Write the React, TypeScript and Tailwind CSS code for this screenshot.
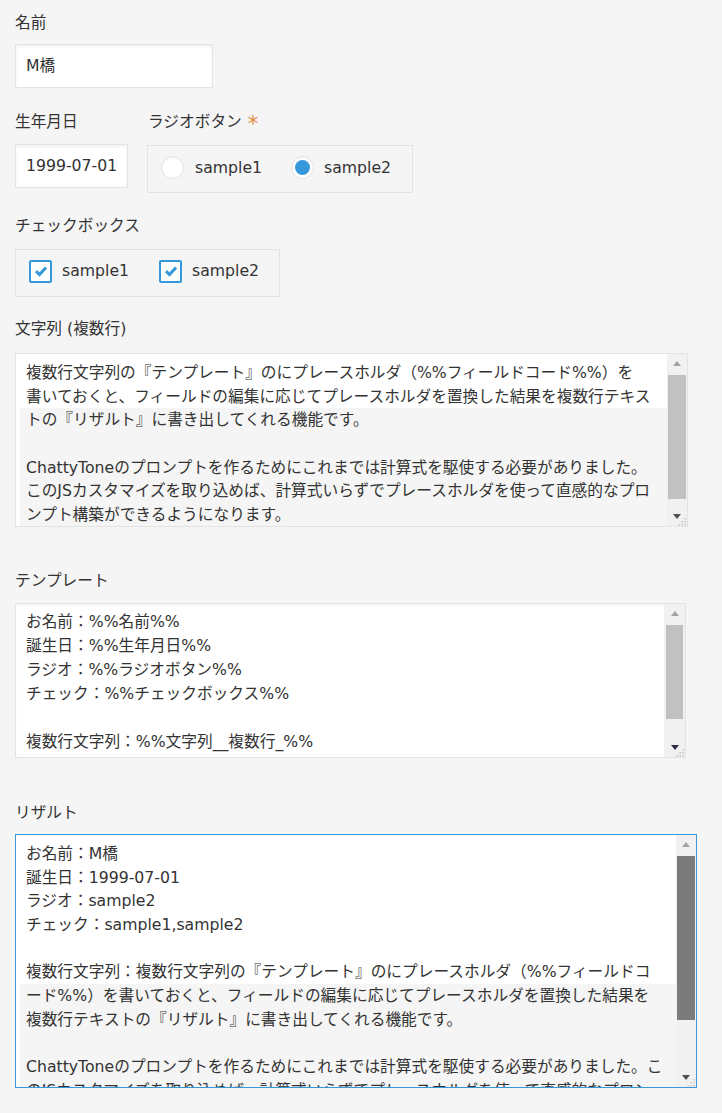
import React from 'react';

const memoWhite = [
  '複数行文字列の『テンプレート』のにプレースホルダ（%%フィールドコード%%）を',
  '書いておくと、フィールドの編集に応じてプレースホルダを置換した結果を複数行テキス',
];
const memoGray = [
  'トの『リザルト』に書き出してくれる機能です。',
  '',
  'ChattyToneのプロンプトを作るためにこれまでは計算式を駆使する必要がありました。',
  'このJSカスタマイズを取り込めば、計算式いらずでプレースホルダを使って直感的なプロ',
  'ンプト構築ができるようになります。',
];

const templateLines = [
  'お名前：%%名前%%',
  '誕生日：%%生年月日%%',
  'ラジオ：%%ラジオボタン%%',
  'チェック：%%チェックボックス%%',
  '',
  '複数行文字列：%%文字列__複数行_%%',
];

const resultWhite = [
  'お名前：M橋',
  '誕生日：1999-07-01',
  'ラジオ：sample2',
  'チェック：sample1,sample2',
  '',
  '複数行文字列：複数行文字列の『テンプレート』のにプレースホルダ（%%フィールドコ',
];
const resultGray = [
  'ード%%）を書いておくと、フィールドの編集に応じてプレースホルダを置換した結果を',
  '複数行テキストの『リザルト』に書き出してくれる機能です。',
  '',
  'ChattyToneのプロンプトを作るためにこれまでは計算式を駆使する必要がありました。こ',
  'のJSカスタマイズを取り込めば、計算式いらずでプレースホルダを使って直感的なプロン',
  'プト構築ができるようになります。',
];

const Label: React.FC<{children: React.ReactNode}> = ({children}) => (
  <div className="h-6 leading-6 flex items-center whitespace-nowrap">{children}</div>
);

const Lines: React.FC<{lines: string[]}> = ({lines}) => (
  <>
    {lines.map((l, i) => (
      <div key={i} className="h-[23.7px] leading-[23.7px] whitespace-pre">{l || ' '}</div>
    ))}
  </>
);

const Arrow: React.FC<{up?: boolean; color: string}> = ({up, color}) => (
  <svg width="8" height="5" viewBox="0 0 8 5">
    <path d={up ? 'M0 5 L4 0 L8 5 Z' : 'M0 0 L8 0 L4 5 Z'} fill={color}/>
  </svg>
);

const Scrollbar: React.FC<{width: string; thumb: string; down: string}> = ({width, thumb, down}) => (
  <div className={`flex flex-col bg-[#f1f1f1] shrink-0 ${width}`}>
    <div className="h-[19px] flex items-center justify-center">
      <Arrow up color="#a3a3a3"/>
    </div>
    <div className="flex-1">
      <div className={thumb}/>
    </div>
    <div className="h-[19px] flex items-center justify-center relative">
      <Arrow color={down}/>
      <svg className="absolute right-0 bottom-0" width="10" height="10" viewBox="0 0 10 10">
        <rect x="7.5" y="2" width="1.5" height="1.5" fill="#c4c4c4"/>
        <rect x="4.5" y="5" width="1.5" height="1.5" fill="#c4c4c4"/>
        <rect x="7.5" y="5" width="1.5" height="1.5" fill="#c4c4c4"/>
        <rect x="1.5" y="8" width="1.5" height="1.5" fill="#c4c4c4"/>
        <rect x="4.5" y="8" width="1.5" height="1.5" fill="#c4c4c4"/>
        <rect x="7.5" y="8" width="1.5" height="1.5" fill="#c4c4c4"/>
      </svg>
    </div>
  </div>
);

const Check: React.FC = () => (
  <span className="w-[23px] h-[23px] rounded-[2px] border-2 border-[#3498db] bg-white flex items-center justify-center shrink-0">
    <svg width="14" height="12" viewBox="0 0 14 12">
      <path d="M2 6.2 L5.5 9.5 L12 2.5" fill="none" stroke="#3498db" strokeWidth="3"/>
    </svg>
  </span>
);

const Radio: React.FC<{checked?: boolean}> = ({checked}) => (
  <span className="w-[23px] h-[23px] rounded-full border border-[#e3e3e3] bg-white flex items-center justify-center shrink-0 shadow-[inset_0_1px_2px_rgba(0,0,0,0.05)]">
    {checked && <span className="w-[15px] h-[15px] rounded-full bg-[#3498db]"/>}
  </span>
);

const inputCls =
  'h-[44px] border border-[#e3e3e3] bg-white pl-[10px] flex items-center shadow-[inset_0_2px_3px_rgba(0,0,0,0.05)]';

export default function App() {
  return (
    <div className="min-h-screen bg-[#f5f5f5] px-[15px] pt-[11px] text-[#333] text-[15.7px] font-['DejaVu_Sans','Noto_Sans_CJK_JP',sans-serif]">
      <Label>名前</Label>
      <div className={`${inputCls} mt-[9px] w-[198px]`}>M橋</div>

      <div className="mt-[22px] flex gap-[19px]">
        <div>
          <Label>生年月日</Label>
          <div className={`${inputCls} mt-[10px] w-[113px]`}>1999-07-01</div>
        </div>
        <div>
          <div className="pl-px">
            <Label>
              ラジオボタン
              <span className="ml-[6px] text-[#e38b3a] text-[21px] leading-none pt-[4px]">*</span>
            </Label>
          </div>
          <div className="mt-[11px] h-[48px] w-[266px] border border-[#e3e3e3] flex items-center pl-[13px] pb-[3px]">
            <Radio/>
            <span className="ml-[11px]">sample1</span>
            <span className="ml-[29px]"><Radio checked/></span>
            <span className="ml-[10px]">sample2</span>
          </div>
        </div>
      </div>

      <div className="mt-[21px]">
        <Label>チェックボックス</Label>
        <div className="mt-[11px] h-[48px] w-[265px] border border-[#e3e3e3] flex items-center pl-[13px] pb-[4px]">
          <Check/>
          <span className="ml-[10px]">sample1</span>
          <span className="ml-[30px]"><Check/></span>
          <span className="ml-[10px]">sample2</span>
        </div>
      </div>

      <div className="mt-[20px]">
        <Label>文字列 (複数行)</Label>
        <div className="mt-[12px] h-[174px] w-[673px] border border-[#e3e3e3] bg-white flex">
          <div className="flex-1 overflow-hidden pl-[10px] pt-[7px]">
            <Lines lines={memoWhite}/>
            <div className="-ml-[6px] pl-[6px] bg-[#f5f5f5]">
              <Lines lines={memoGray}/>
            </div>
          </div>
          <Scrollbar width="w-[20px]" thumb="mt-[2px] h-[124px] mx-[1px] bg-[#c1c1c1]" down="#505050"/>
        </div>
      </div>

      <div className="mt-[42px]">
        <Label>テンプレート</Label>
        <div className="mt-[10px] h-[155px] w-[671px] border border-[#e3e3e3] bg-white flex shadow-[inset_0_2px_3px_rgba(0,0,0,0.04)]">
          <div className="flex-1 overflow-hidden pl-[10px] pt-[6px]">
            <div className="leading-6">
              {templateLines.map((l, i) => (
                <div key={i} className="h-6 whitespace-pre">{l || ' '}</div>
              ))}
            </div>
          </div>
          <Scrollbar width="w-[21px]" thumb="mt-[2px] h-[94px] mx-[2px] bg-[#c1c1c1]" down="#2d2d4a"/>
        </div>
      </div>

      <div className="mt-[43px]">
        <Label>リザルト</Label>
        <div className="mt-[9px] h-[254px] w-[682px] border border-[#3498db] bg-white flex">
          <div className="flex-1 overflow-hidden pl-[10px] pt-[7px]">
            <Lines lines={resultWhite}/>
            <div className="-ml-[6px] pl-[6px] bg-[#f5f5f5]">
              <Lines lines={resultGray}/>
            </div>
          </div>
          <Scrollbar width="w-[20px]" thumb="mt-[2px] h-[164px] mx-[1px] bg-[#7b7b7b]" down="#505050"/>
        </div>
      </div>
    </div>
  );
}
